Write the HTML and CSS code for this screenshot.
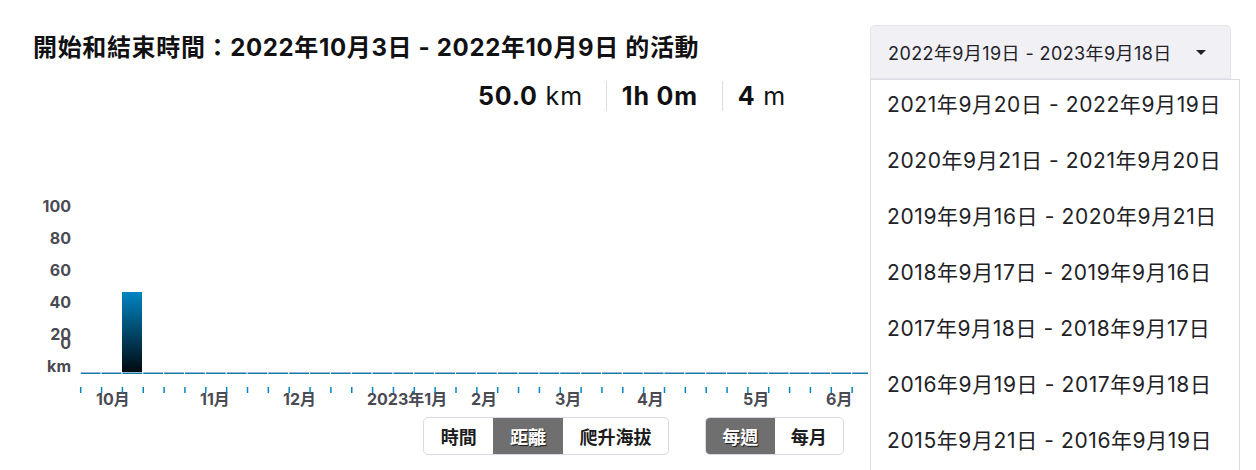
FILE: index.html
```html
<!DOCTYPE html>
<html lang="zh-Hant">
<head>
<meta charset="utf-8">
<title>活動</title>
<link rel="stylesheet" href="styles.css">
</head>
<body>
<div class="page">
  <div class="top">
    <div class="head">
      <h1 class="title">開始和結束時間：2022年10月3日 - 2022年10月9日 的活動</h1>
      <div class="stats">
        <div class="stat"><b>50.0</b> km</div>
        <div class="stat"><b>1h 0m</b></div>
        <div class="stat"><b>4</b> m</div>
      </div>
    </div>
    <div class="dropdown">
      <button class="dd-btn" type="button"><span>2022年9月19日 - 2023年9月18日</span><span class="caret"></span></button>
      <ul class="menu">
        <li>2021年9月20日 - 2022年9月19日</li>
        <li>2020年9月21日 - 2021年9月20日</li>
        <li>2019年9月16日 - 2020年9月21日</li>
        <li>2018年9月17日 - 2019年9月16日</li>
        <li>2017年9月18日 - 2018年9月17日</li>
        <li>2016年9月19日 - 2017年9月18日</li>
        <li>2015年9月21日 - 2016年9月19日</li>
      </ul>
    </div>
  </div>

  <svg class="chart" width="870" height="225" viewBox="0 190 870 225" xmlns="http://www.w3.org/2000/svg">
    <defs>
      <linearGradient id="barGrad" x1="0" y1="0" x2="0" y2="1">
        <stop offset="0" stop-color="#0085c2"/>
        <stop offset="1" stop-color="#000910"/>
      </linearGradient>
    </defs>
    <g class="ylabels">
      <text x="71" y="212">100</text>
      <text x="71" y="244">80</text>
      <text x="71" y="276">60</text>
      <text x="71" y="308">40</text>
      <text x="71" y="340">20</text>
      <text x="71" y="349">0</text>
      <text x="71" y="372">km</text>
    </g>
    <rect x="122" y="292" width="20" height="80" fill="url(#barGrad)"/>
    <line class="axis" x1="80.7" y1="373.3" x2="868" y2="373.3"/>
    <g class="xlabels">
      <text x="96" y="405">10月</text>
      <text x="200" y="405">11月</text>
      <text x="283" y="405">12月</text>
      <text x="367" y="405">2023年1月</text>
      <text x="471" y="405">2月</text>
      <text x="555" y="405">3月</text>
      <text x="637" y="405">4月</text>
      <text x="743" y="405">5月</text>
      <text x="826" y="405">6月</text>
    </g>
    <g class="ticks" id="ticks"></g>
  </svg>

  <div class="controls">
    <div class="seg">
      <button class="seg-btn" type="button">時間</button>
      <button class="seg-btn active" type="button">距離</button>
      <button class="seg-btn" type="button">爬升海拔</button>
    </div>
    <div class="seg seg-period">
      <button class="seg-btn active" type="button">每週</button>
      <button class="seg-btn" type="button">每月</button>
    </div>
  </div>
</div>
<script src="ticks.js"></script>
</body>
</html>
```

FILE: ticks.js
```js
(function () {
  var g = document.getElementById('ticks');
  var ns = 'http://www.w3.org/2000/svg';
  for (var i = 0; i < 38; i++) {
    var x = 80.7 + i * 20.85;
    var r = document.createElementNS(ns, 'rect');
    r.setAttribute('x', (x - 0.75).toFixed(2));
    r.setAttribute('y', '387');
    r.setAttribute('width', '1.5');
    r.setAttribute('height', '6');
    g.appendChild(r);
  }
})();
```

FILE: styles.css
```css
* { box-sizing: border-box; }

html, body {
  margin: 0;
  padding: 0;
  background: #ffffff;
}

body {
  font-family: Inter, "Noto Sans CJK TC", "Noto Sans", sans-serif;
  color: #151518;
}

.page {
  position: relative;
  width: 1256px;
  height: 470px;
  overflow: hidden;
}

.top {
  display: flex;
  justify-content: space-between;
  align-items: flex-start;
  height: 190px;
  padding: 25px 25px 0 33px;
}

.title {
  margin: 7px 0 0;
  font-size: 24px;
  line-height: 32px;
  font-weight: 700;
  letter-spacing: 0.65px;
  color: #111114;
  white-space: nowrap;
}

.stats {
  display: flex;
  margin-top: 17px;
  padding-left: 445px;
  font-size: 25px;
  line-height: 30px;
  letter-spacing: 0.8px;
  color: #111114;
}

.stat {
  padding: 0 24px 0 15px;
  border-left: 1px solid #dcdce2;
  white-space: nowrap;
}

.stat:first-child {
  padding-left: 0;
  padding-right: 23px;
  border-left: none;
}

.stat:last-child {
  padding-right: 0;
}

.stat b { font-weight: 700; }

.dropdown {
  position: relative;
  width: 361px;
}

.dd-btn {
  display: flex;
  align-items: center;
  width: 361px;
  height: 54px;
  padding: 0 24px 0 17px;
  border: 1px solid #e3e3ea;
  border-radius: 5px 5px 0 0;
  background: #f0f0f5;
  font-family: inherit;
  font-size: 18px;
  letter-spacing: 0.4px;
  color: #222226;
  white-space: nowrap;
}

.caret {
  margin-left: auto;
  width: 0;
  height: 0;
  border-left: 5px solid transparent;
  border-right: 5px solid transparent;
  border-top: 5px solid #222226;
}

.menu {
  position: absolute;
  top: 54px;
  left: 0;
  width: 370px;
  height: 420px;
  margin: 0;
  padding: 0;
  list-style: none;
  background: #ffffff;
  border: 1px solid #dcdce4;
}

.menu li {
  padding: 13px 0 19px 16px;
  font-size: 21px;
  line-height: 24px;
  letter-spacing: 0.6px;
  color: #222226;
  white-space: nowrap;
}

.chart {
  display: block;
}

.chart text {
  font-family: Inter, "Noto Sans CJK TC", sans-serif;
  font-size: 16px;
  font-weight: 700;
  fill: #4a4a53;
}

.ylabels text { text-anchor: end; }

.axis {
  stroke: #1b79aa;
  stroke-width: 1.4;
  stroke-dasharray: 19.85 1;
}

.ticks rect { fill: #0a84c2; }

.controls {
  display: flex;
  gap: 36px;
  margin-top: 2px;
  padding-left: 423px;
}

.seg {
  display: flex;
  height: 38px;
  border: 1px solid #dadae2;
  border-radius: 5px;
  overflow: hidden;
  background: #ffffff;
}

.seg-btn {
  padding: 0 16.7px;
  border: none;
  background: transparent;
  font-family: inherit;
  font-size: 18px;
  font-weight: 700;
  color: #1c1c20;
}

.seg-period .seg-btn {
  padding: 0 16.2px;
}

.seg-btn.active {
  background: #6f6f70;
  color: #ffffff;
  text-shadow: 1px 1px 1px #1a1a1a;
}
```
